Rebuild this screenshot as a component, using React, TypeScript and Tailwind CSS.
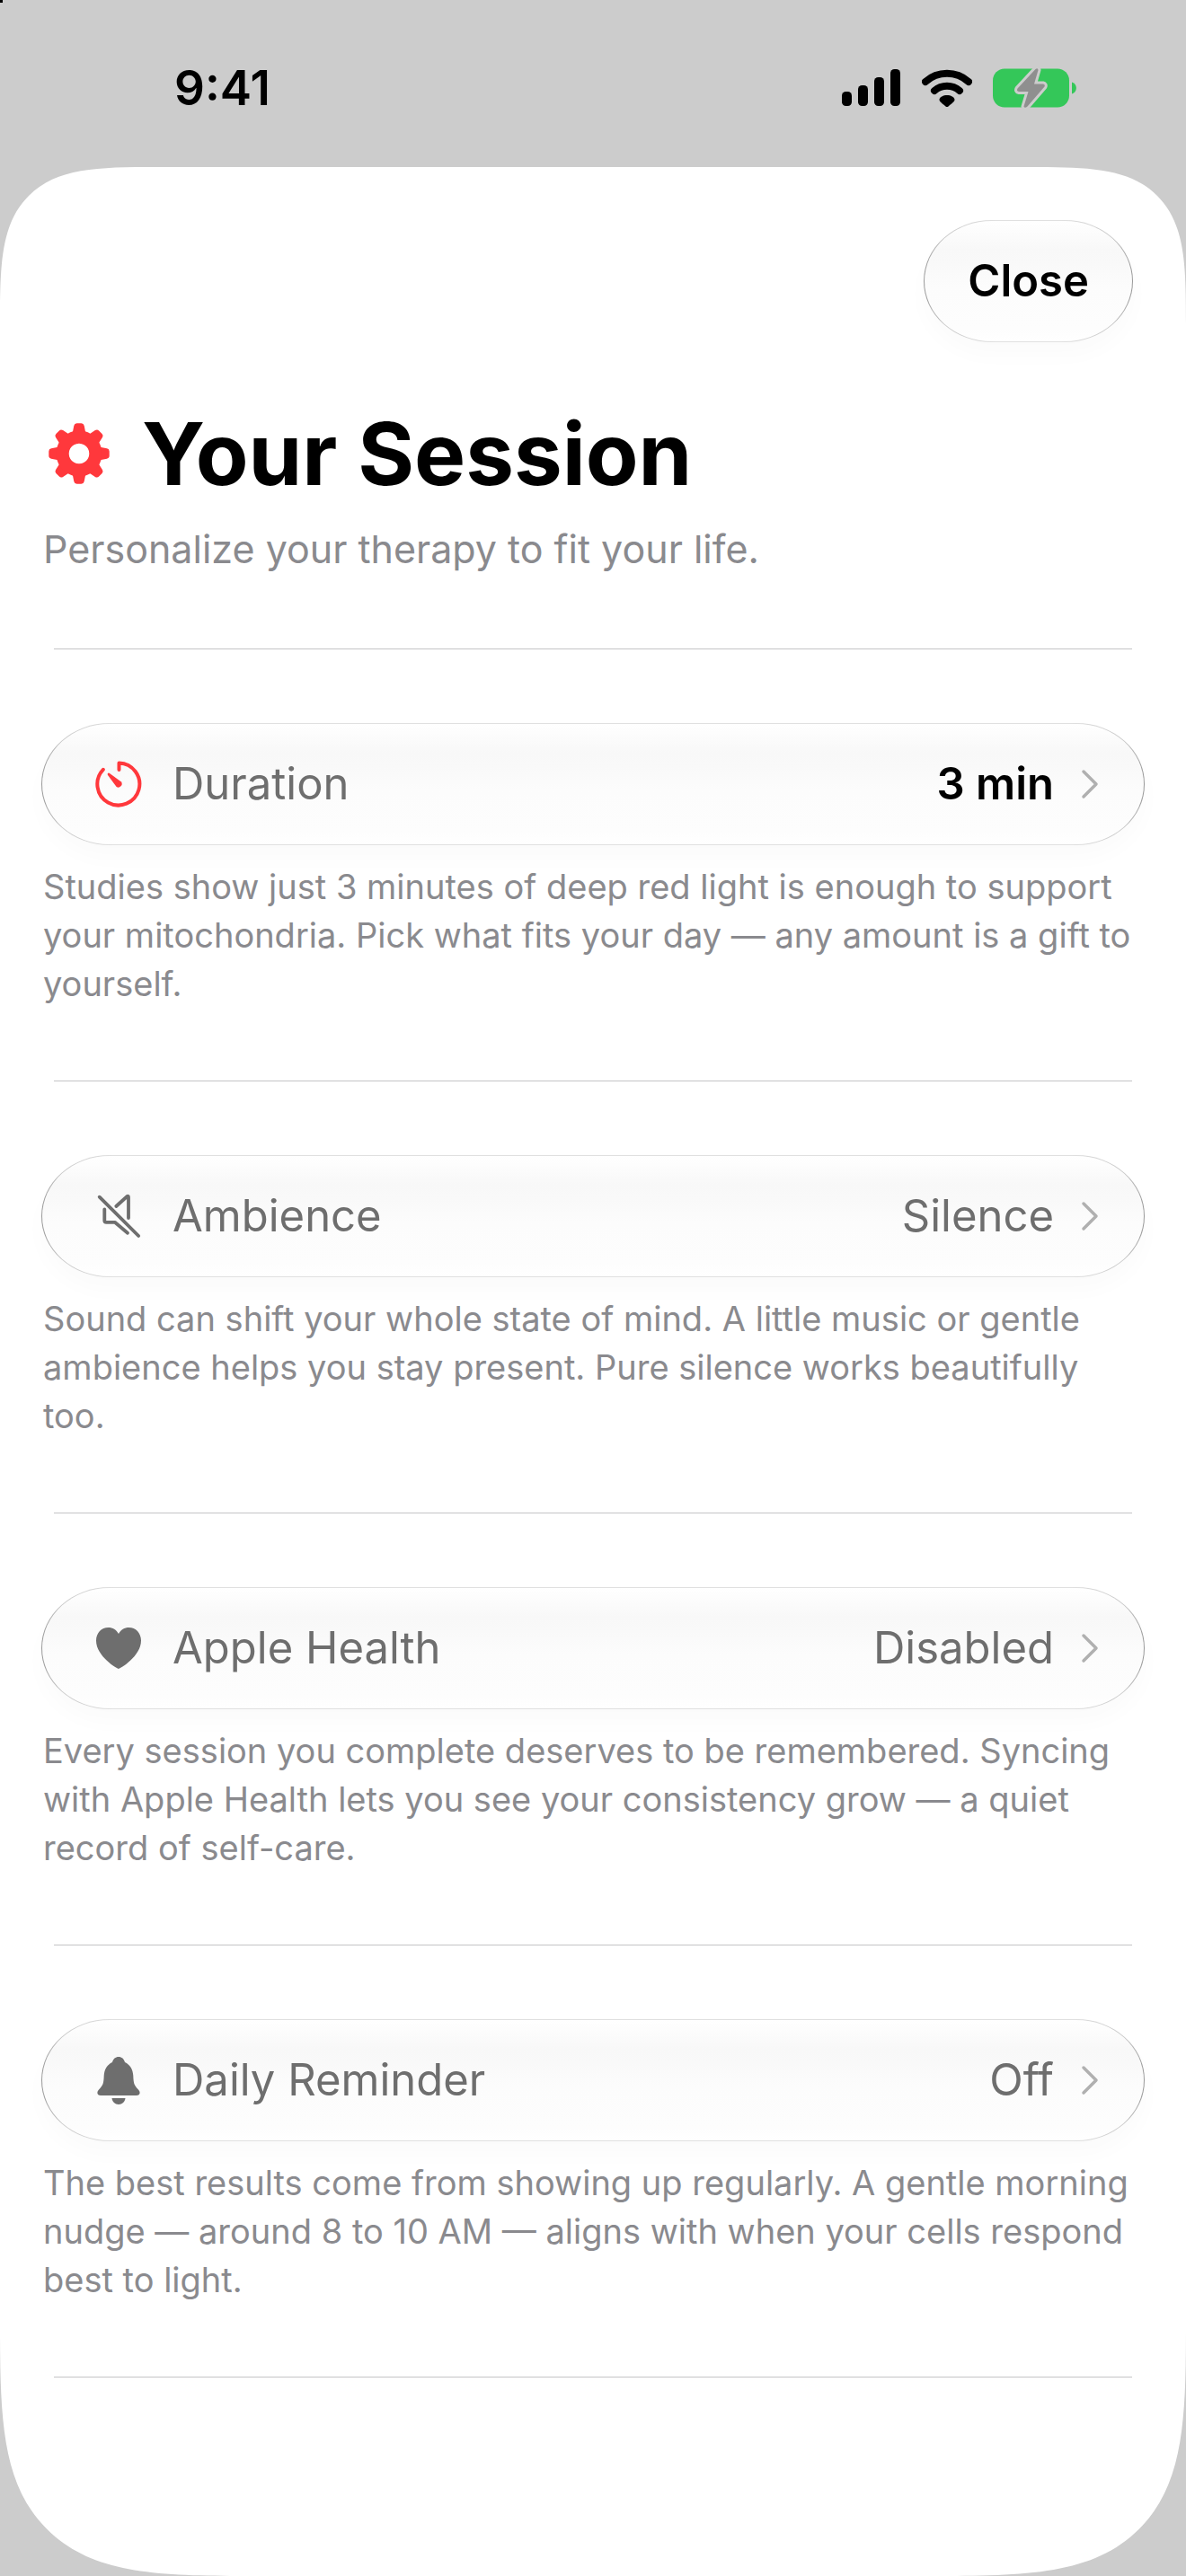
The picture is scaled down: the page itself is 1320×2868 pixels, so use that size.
import React from "react";

const GearIcon = () => (
  <svg viewBox="0 0 68 68" className="w-[68px] h-[68px]" fill="#ff383c">
    {[0, 45, 90, 135, 180, 225, 270, 315].map((a) => (
      <path
        key={a}
        transform={`rotate(${a} 34 34)`}
        d="M24.500 13 L27 9.500 L28.300 3 Q28.900 0.300 31.500 0.300 H36.500 Q39.100 0.300 39.700 3 L41 9.500 L43.500 13 Z"
      />
    ))}
    <path
      fillRule="evenodd"
      d="M34 8.500 a25.500 25.500 0 1 0 0.01 0 Z M34 22.700 a11.300 11.300 0 1 1 -0.01 0 Z"
    />
  </svg>
);

const TimerIcon = () => (
  <svg viewBox="0 0 52 52" className="w-[52px] h-[52px]" fill="none">
    <path
      d="M26.500 10 V2.500 A23.500 23.500 0 1 1 8.800 9.800"
      stroke="#ff383c"
      strokeWidth="4"
      strokeLinecap="round"
      strokeLinejoin="round"
    />
    <path
      d="M14 14 Q14.800 13.200 16 14 L29 23.400 A4 4 0 0 1 23.600 29 L14 16 Q13.200 14.800 14 14 Z"
      fill="#ff383c"
    />
  </svg>
);

const MuteIcon = () => (
  <svg
    viewBox="0 0 52 52"
    className="w-[52px] h-[52px]"
    fill="none"
    stroke="#6e6e6e"
    strokeWidth="3.8"
    strokeLinecap="round"
    strokeLinejoin="round"
  >
    <path d="M4.700 4.700 L48.200 48" />
    <path d="M23.300 15 L35.500 4 Q37 3.200 37 5 V28" />
    <path d="M10.300 18.500 V31 Q10.300 32.800 12.300 32.800 H21.800 L36 44.700" />
  </svg>
);

const HeartIcon = () => (
  <svg viewBox="0 0 52 52" className="w-[52px] h-[52px]" fill="#6e6e6e">
    <path d="M26 49 C24.500 49 1 35 1 17.500 C1 9 7 3 14.500 3 C19.500 3 23.500 5.500 26 10 C28.500 5.500 32.500 3 37.500 3 C45 3 51 9 51 17.500 C51 35 27.500 49 26 49 Z" />
  </svg>
);

const BellIcon = () => (
  <svg viewBox="0 0 52 56" className="w-[52px] h-[56px]" fill="#6e6e6e">
    <path d="M26 2 C29.500 2 32 4.300 33 8 C38.500 10.500 42 16 42.300 23 C42.600 31 43 33.500 48 38.500 C51 41.500 49.500 45 46 45 H6 C2.500 45 1 41.500 4 38.500 C9 33.500 9.400 31 9.700 23 C10 16 13.500 10.500 19 8 C20 4.300 22.500 2 26 2 Z" />
    <path d="M18.500 48 H33.500 C33 52 30 55 26 55 C22 55 19 52 18.500 48 Z" />
  </svg>
);

const ChevronIcon = () => (
  <svg
    viewBox="0 0 20 34"
    className="w-5 h-[34px]"
    fill="none"
    stroke="#b0b0b0"
    strokeWidth="3.5"
    strokeLinecap="round"
    strokeLinejoin="round"
  >
    <path d="M3 3 L17 17 L3 31" />
  </svg>
);

const StatusBar = () => (
  <header className="flex justify-between items-center h-[186px] pl-[194px] pr-[121px] pt-2.5">
    <time className="text-[53px] leading-[64px] font-semibold">9:41</time>
    <div className="flex items-center gap-[23px]">
      <svg viewBox="0 0 66 42" className="w-[66px] h-[42px]">
        <rect x="0" y="25" width="11" height="16" rx="4.5" />
        <rect x="18" y="18" width="11" height="23" rx="4.5" />
        <rect x="36" y="9" width="11" height="32" rx="4.5" />
        <rect x="54" y="0" width="11" height="41" rx="4.5" />
      </svg>
      <svg viewBox="0 0 56 42" className="w-14 h-[42px]" fill="none">
        <path
          d="M4 14 A36 36 0 0 1 52 14"
          stroke="#000"
          strokeWidth="8"
          strokeLinecap="round"
        />
        <path
          d="M14 24 A21.500 21.500 0 0 1 42 24"
          stroke="#000"
          strokeWidth="8"
          strokeLinecap="round"
        />
        <path
          d="M28 29 C32 29 36.500 31 36.500 34 C36.500 36 34 37.500 29.500 41.500 Q28 42.700 26.500 41.500 C22 37.500 19.500 36 19.500 34 C19.500 31 24 29 28 29 Z"
          fill="#000"
        />
      </svg>
      <svg viewBox="0 0 94 46" className="w-[94px] h-[46px]">
        <rect x="0" y="1.5" width="85" height="43" rx="13" fill="#34c759" />
        <path d="M88 16.500 C94.500 18 94.500 28 88 29.500 Z" fill="#34c759" />
        <path
          d="M47.500 2 L27.500 23.500 Q26 26.500 29 27 H39.500 L34.500 43.500 Q35.500 46 38.500 43.500 L57.500 21.500 Q58.500 19 56 18.500 H46 L50.500 3 Q50 0 47.500 2 Z"
          fill="#8f8f8f"
          stroke="#cccccc"
          strokeWidth="6"
          paintOrder="stroke"
          strokeLinejoin="round"
        />
      </svg>
    </div>
  </header>
);

const glass =
  "border border-transparent rounded-[76px/68px] shadow-[0_14px_26px_rgba(0,0,0,0.02)] [background:linear-gradient(to_bottom,#fff,#f8f8f8_24%,#f9f9f9_36%,#fcfcfc_55%,#fdfdfd_90%,#fff)_padding-box,linear-gradient(to_right,#989898,#c8c8c8_24px,#e0e0e0_80px,#e0e0e0_calc(100%-80px),#c8c8c8_calc(100%-24px),#989898)_border-box]";

interface Setting {
  icon: React.ReactNode;
  name: string;
  value: string;
  active?: boolean;
  text: string;
}

const settings: Setting[] = [
  {
    icon: <TimerIcon />,
    name: "Duration",
    value: "3 min",
    active: true,
    text: "Studies show just 3 minutes of deep red light is enough to support your mitochondria. Pick what fits your day — any amount is a gift to yourself.",
  },
  {
    icon: <MuteIcon />,
    name: "Ambience",
    value: "Silence",
    text: "Sound can shift your whole state of mind. A little music or gentle ambience helps you stay present. Pure silence works beautifully too.",
  },
  {
    icon: <HeartIcon />,
    name: "Apple Health",
    value: "Disabled",
    text: "Every session you complete deserves to be remembered. Syncing with Apple Health lets you see your consistency grow — a quiet record of self-care.",
  },
  {
    icon: <BellIcon />,
    name: "Daily Reminder",
    value: "Off",
    text: "The best results come from showing up regularly. A gentle morning nudge — around 8 to 10 AM — aligns with when your cells respond best to light.",
  },
];

const SettingItem = ({ setting }: { setting: Setting }) => (
  <li className="border-b border-[#c4c4c6] mx-[60px] pt-[82px] pb-[81px]">
    <div className="-mx-3.5">
      <button
        type="button"
        className={`w-full h-[136px] flex items-center pl-[59px] pr-[50px] text-[49px] leading-[60px] ${glass}`}
      >
        <span className="w-[52px] flex justify-center">{setting.icon}</span>
        <span className="ml-[34px] text-[#6e6e6e]">{setting.name}</span>
        <span
          className={`ml-auto mr-[30px] ${
            setting.active ? "text-black font-semibold" : "text-[#6e6e6e]"
          }`}
        >
          {setting.value}
        </span>
        <ChevronIcon />
      </button>
      <p className="mt-[19px] px-0.5 text-[38px] leading-[54px] text-[#8a8a8e]">
        {setting.text}
      </p>
    </div>
  </li>
);

const App = () => {
  return (
    <div className="relative min-h-screen flex flex-col bg-[#cccccc] text-black font-[Inter,'Liberation_Sans',sans-serif]">
      <span className="absolute top-0 left-0 size-[3px] bg-black" />
      <StatusBar />
      <main className="grow bg-white rounded-t-[114px] rounded-b-[186px] supports-[corner-shape:squircle]:rounded-t-[174px] supports-[corner-shape:squircle]:rounded-b-[284px] [corner-shape:superellipse(1.77)]">
        <div className="flex justify-end pt-[59px] pr-[59px]">
          <button
            type="button"
            className={`h-[136px] px-12 text-[49px] leading-[60px] font-semibold ${glass}`}
          >
            Close
          </button>
        </div>
        <div className="px-12 pt-[64px]">
          <h1 className="flex items-center gap-9 pl-1.5 text-[96px] leading-[120px] font-bold">
            <GearIcon />
            Your Session
          </h1>
          <p className="mt-4 text-[43px] leading-[60px] text-[#8a8a8e]">
            Personalize your therapy to fit your life.
          </p>
        </div>
        <hr className="mx-[60px] mt-[81px] border-t border-[#c4c4c6]" />
        <ul>
          {settings.map((s) => (
            <SettingItem key={s.name} setting={s} />
          ))}
        </ul>
      </main>
    </div>
  );
};

export default App;
